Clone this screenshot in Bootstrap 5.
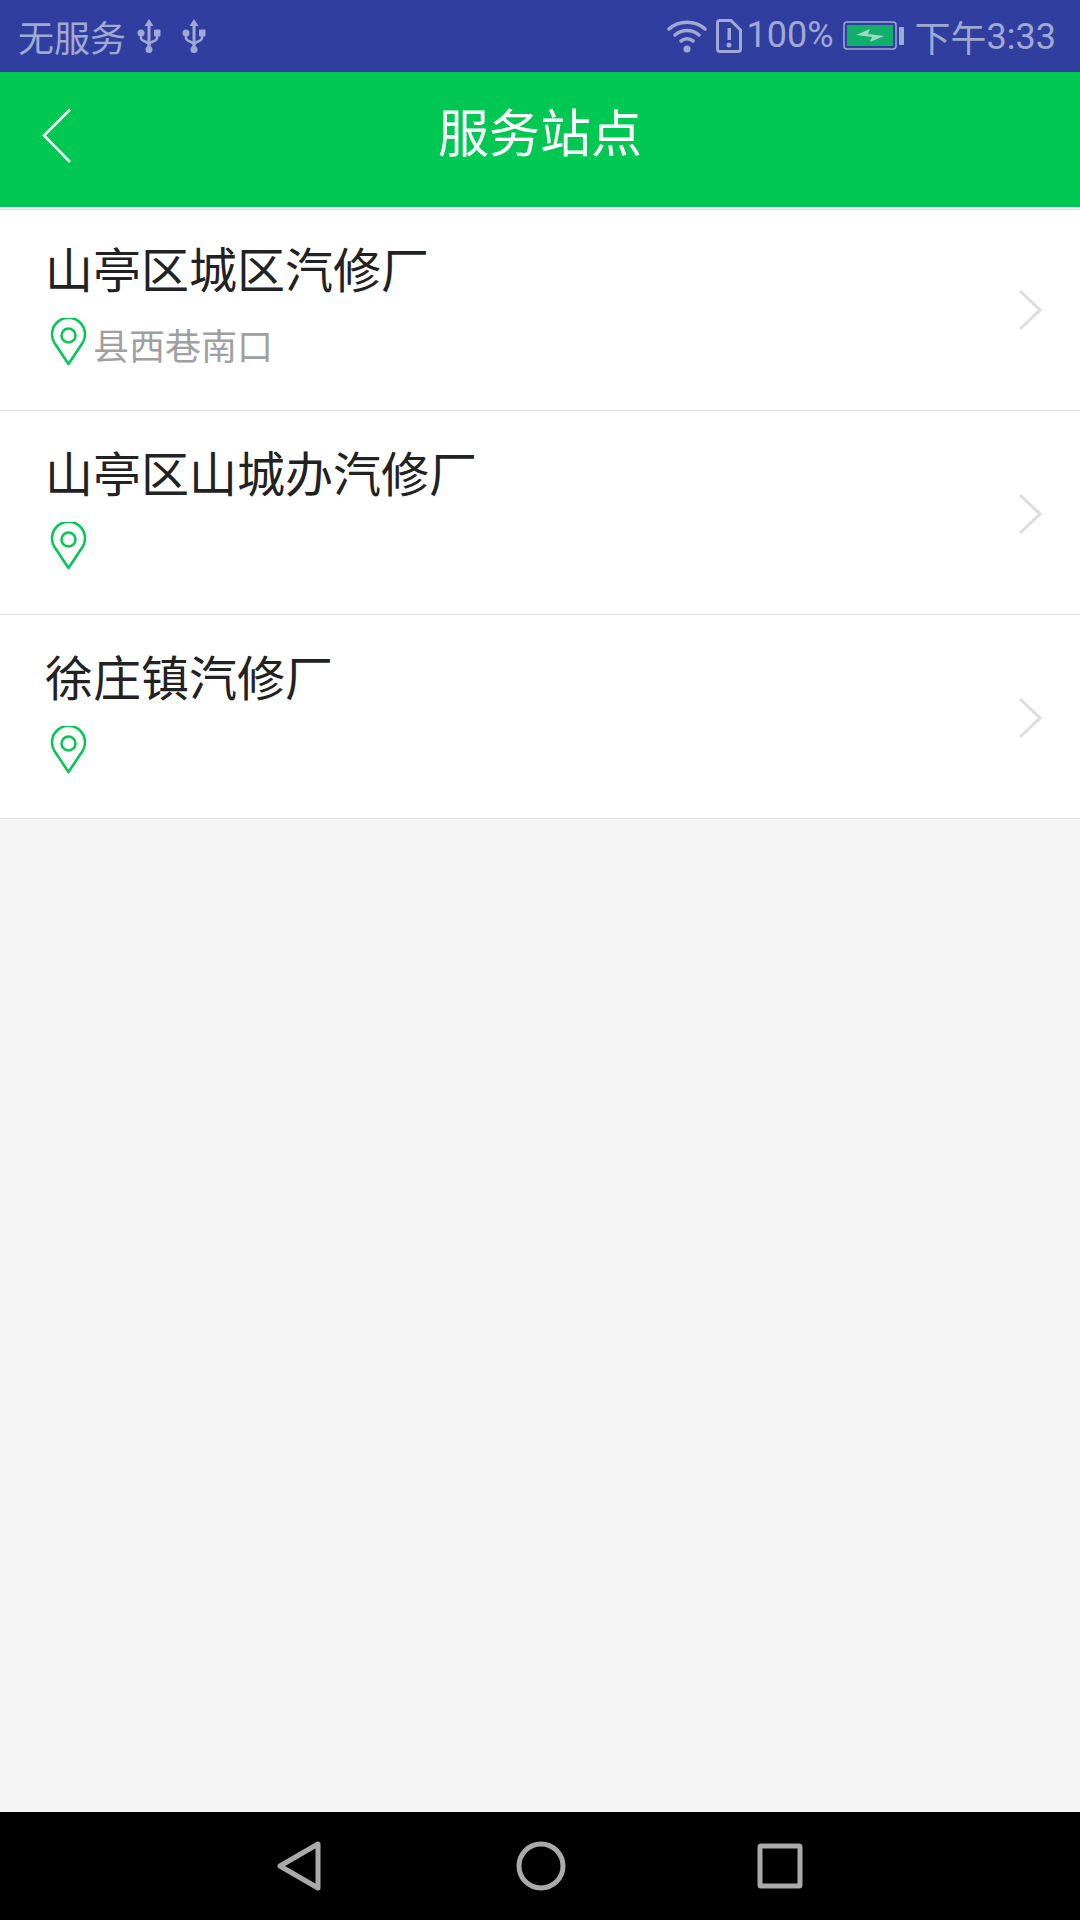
<!DOCTYPE html>
<html lang="zh-CN">
<head>
    <meta charset="UTF-8">
    <meta name="viewport" content="width=device-width, initial-scale=1.0">
    <title>服务站点</title>
    <link href="https://cdn.jsdelivr.net/npm/bootstrap@5.3.0/dist/css/bootstrap.min.css" rel="stylesheet">
    <style>
        html, body { height: 100%; }
        body { background: #f5f5f5; font-family: "Noto Sans CJK SC", "Noto Sans", sans-serif; }
        .screen { height: 1920px; }
        .status-bar { height: 72px; background: #303f9f; color: #a0a8d4; padding: 0 24px 0 18px; }
        .status-text { font-size: 36px; line-height: 1; }
        .status-num { font-family: Roboto, sans-serif; font-size: 36px; line-height: 1; }
        .percent-num { padding-bottom: 2px; }
        .time-num { padding-top: 2px; }
        .usb-first { margin: 0 21px 0 11px; }
        .wifi-icon { margin-right: 9px; }
        .sim-icon { margin-right: 4px; }
        .batt-icon { margin: 0 10px 0 9px; }
        .app-bar { height: 135px; background: #00c853; color: #fff; padding-bottom: 18px; }
        .app-title { font-size: 51px; line-height: 1; }
        .back-btn { left: 42px; top: 36px; }
        .station-row { height: 204px; background: #fff; border-bottom: 1px solid #ddd; padding: 36px 38px 0 45px; }
        .station-row:first-child::before { content: ""; position: absolute; left: 0; right: 0; top: 2px; height: 1px; background: #ddd; }
        .row-arrow { margin-top: 46px; }
        .station-name { font-size: 48px; line-height: 1; color: #222; }
        .station-addr { font-size: 36px; line-height: 1; color: #a0a0a0; height: 48px; margin-top: 27px; padding-left: 5px; gap: 6px; }
        .station-addr span { padding-top: 4px; }
        .nav-strip { height: 108px; background: #000; }
        .nav-left { margin-right: 193px; }
        .nav-right { margin-left: 191px; }
    </style>
</head>
<body>
    <div class="screen d-flex flex-column">
        <!-- status bar -->
        <div class="status-bar d-flex align-items-center justify-content-between">
            <div class="d-flex align-items-center">
                <span class="status-text">无服务</span>
                <svg class="usb-first" width="24" height="34" viewBox="0 0 24 34" fill="#a0a8d4"><path d="M12 0l4.500 7h-3v23h-3V7h-3z"/><circle cx="12" cy="30.500" r="3.500"/><circle cx="4" cy="14" r="3.500"/><rect x="17" y="10.500" width="6.500" height="7" rx="1"/><path d="M4 15v4c0 4 8 3 8 7M20 15v4c0 4-8 3-8 7" fill="none" stroke="#a0a8d4" stroke-width="2.500"/></svg>
                <svg width="24" height="34" viewBox="0 0 24 34" fill="#a0a8d4"><path d="M12 0l4.500 7h-3v23h-3V7h-3z"/><circle cx="12" cy="30.500" r="3.500"/><circle cx="4" cy="14" r="3.500"/><rect x="17" y="10.500" width="6.500" height="7" rx="1"/><path d="M4 15v4c0 4 8 3 8 7M20 15v4c0 4-8 3-8 7" fill="none" stroke="#a0a8d4" stroke-width="2.500"/></svg>
            </div>
            <div class="d-flex align-items-center">
                <svg class="wifi-icon" width="40" height="34" viewBox="0 0 40 34" fill="none" stroke="#a0a8d4" stroke-width="3.500" stroke-linecap="round">
                    <path d="M2 10c10-9 26-9 36 0M8 16c7-6 17-6 24 0M14 22c4-3 8-3 12 0"/>
                    <circle cx="20" cy="30" r="3.500" fill="#a0a8d4" stroke="none"/>
                </svg>
                <svg class="sim-icon" width="26" height="34" viewBox="0 0 26 34">
                    <path d="M3.500 1.500h11.500l9.500 9.500V30a2.500 2.500 0 0 1-2.500 2.500H4A2.500 2.500 0 0 1 1.500 30V4a2.500 2.500 0 0 1 2-2.500z" fill="none" stroke="#a0a8d4" stroke-width="3"/>
                    <rect x="11.500" y="9" width="3.500" height="12" fill="#a0a8d4"/>
                    <circle cx="13" cy="26" r="2.500" fill="#a0a8d4"/>
                </svg>
                <span class="status-num percent-num">100%</span>
                <svg class="batt-icon" width="62" height="30" viewBox="0 0 62 30">
                    <rect x="1" y="1" width="52" height="27" rx="3" fill="none" stroke="#a0a8d4" stroke-width="1.500"/>
                    <rect x="4" y="4" width="46" height="21" fill="#11b06a"/>
                    <path d="M13 14L27 8l-2 5 16 2-14 6 2-5z" fill="#9fd8c8"/>
                    <rect x="56" y="6" width="5" height="18" rx="1" fill="#a0a8d4"/>
                </svg>
                <span class="status-text">下午</span><span class="status-num time-num">3:33</span>
            </div>
        </div>

        <!-- app bar -->
        <div class="app-bar position-relative d-flex align-items-center justify-content-center">
            <svg class="back-btn position-absolute" width="30" height="56" viewBox="0 0 30 56" fill="none" stroke="#fff" stroke-width="2.500">
                <path d="M28 1.500L2 27.500l26 26.500"/>
            </svg>
            <span class="app-title">服务站点</span>
        </div>

        <!-- stations -->
        <div class="station-list">
            <div class="station-row position-relative d-flex align-items-start justify-content-between">
                <div>
                    <div class="station-name">山亭区城区汽修厂</div>
                    <div class="station-addr d-flex align-items-center">
                        <svg width="37" height="48" viewBox="0 0 37 48" fill="none" stroke="#00c853" stroke-width="2.500"><path d="M18.500 46L4.500 25A16.500 16.500 0 1 1 32.500 25z" stroke-linejoin="round"/><circle cx="18.500" cy="17.500" r="7"/></svg>
                        <span>县西巷南口</span>
                    </div>
                </div>
                <svg class="row-arrow" width="24" height="42" viewBox="0 0 24 42" fill="none" stroke="#dddddd" stroke-width="3"><path d="M2 2l20 19-20 19"/></svg>
            </div>
            <div class="station-row position-relative d-flex align-items-start justify-content-between">
                <div>
                    <div class="station-name">山亭区山城办汽修厂</div>
                    <div class="station-addr d-flex align-items-center">
                        <svg width="37" height="48" viewBox="0 0 37 48" fill="none" stroke="#00c853" stroke-width="2.500"><path d="M18.500 46L4.500 25A16.500 16.500 0 1 1 32.500 25z" stroke-linejoin="round"/><circle cx="18.500" cy="17.500" r="7"/></svg>
                    </div>
                </div>
                <svg class="row-arrow" width="24" height="42" viewBox="0 0 24 42" fill="none" stroke="#dddddd" stroke-width="3"><path d="M2 2l20 19-20 19"/></svg>
            </div>
            <div class="station-row position-relative d-flex align-items-start justify-content-between">
                <div>
                    <div class="station-name">徐庄镇汽修厂</div>
                    <div class="station-addr d-flex align-items-center">
                        <svg width="37" height="48" viewBox="0 0 37 48" fill="none" stroke="#00c853" stroke-width="2.500"><path d="M18.500 46L4.500 25A16.500 16.500 0 1 1 32.500 25z" stroke-linejoin="round"/><circle cx="18.500" cy="17.500" r="7"/></svg>
                    </div>
                </div>
                <svg class="row-arrow" width="24" height="42" viewBox="0 0 24 42" fill="none" stroke="#dddddd" stroke-width="3"><path d="M2 2l20 19-20 19"/></svg>
            </div>
        </div>

        <div class="flex-grow-1"></div>

        <!-- android nav -->
        <div class="nav-strip d-flex align-items-center justify-content-center">
            <svg class="nav-left" width="46" height="50" viewBox="0 0 46 50" fill="none" stroke="#aaaaaa" stroke-width="5" stroke-linejoin="round"><path d="M41 3v44L3 25z"/></svg>
            <svg width="50" height="50" viewBox="0 0 50 50" fill="none" stroke="#aaaaaa" stroke-width="5"><circle cx="25" cy="25" r="22"/></svg>
            <svg class="nav-right" width="46" height="46" viewBox="0 0 46 46" fill="none" stroke="#aaaaaa" stroke-width="5" stroke-linejoin="round"><rect x="3" y="3" width="40" height="40" rx="1"/></svg>
        </div>
    </div>
    <script src="https://cdn.jsdelivr.net/npm/bootstrap@5.3.0/dist/js/bootstrap.bundle.min.js"></script>
</body>
</html>
